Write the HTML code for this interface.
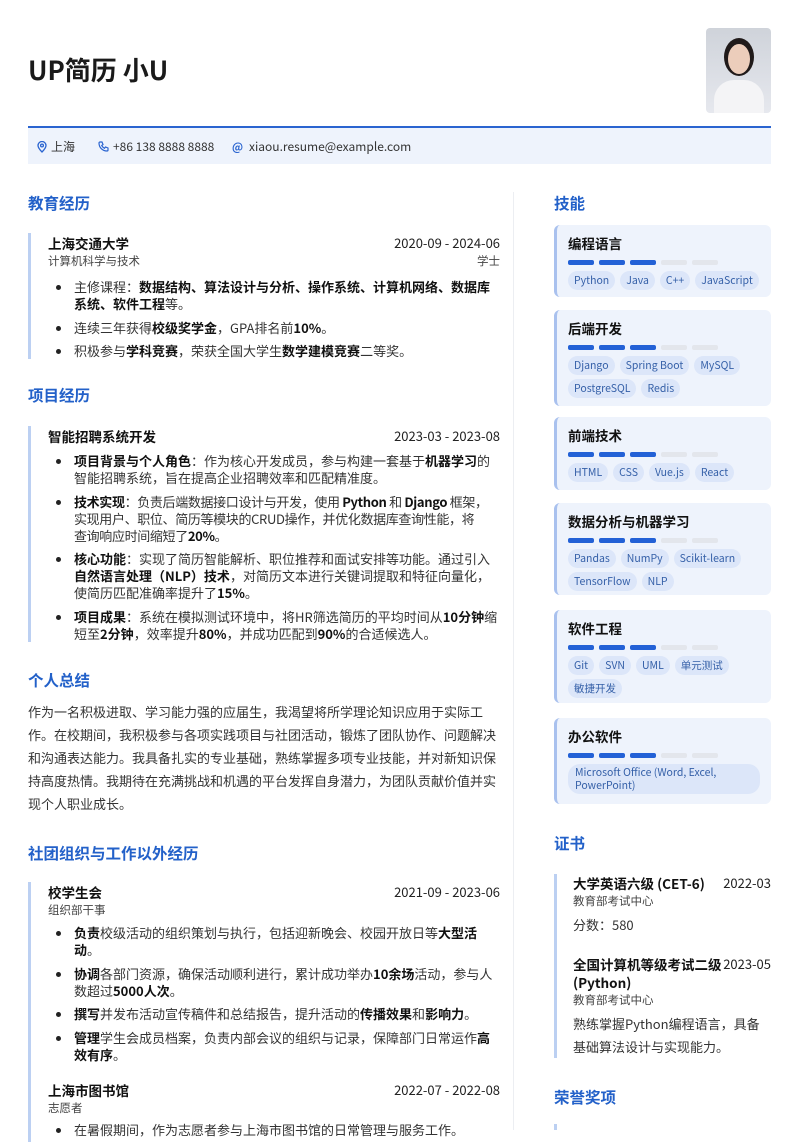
<!DOCTYPE html>
<html><head><meta charset="utf-8"><style>
*{margin:0;padding:0;box-sizing:border-box}
body{width:799px;height:1130px;overflow:hidden;background:#fff;position:relative;font-family:"Noto Sans CJK SC","Liberation Sans",sans-serif;color:#222;font-size:13px}
.a{position:absolute}
h1{position:absolute;left:28px;top:52px;font-size:26px;font-weight:bold;color:#1a1a1a;line-height:36px}
.st{position:absolute;font-size:15.5px;font-weight:bold;color:#2361c9;line-height:20px}
.ent{position:absolute;border-left:3px solid #bcd0f2;padding-left:17px}
.row{display:flex;justify-content:space-between;line-height:18px}
.nm{font-weight:bold;font-size:13.5px;color:#111}
.sub{font-size:11.5px;color:#444;line-height:18px}
ul{list-style:none;margin-top:8px}
li{position:relative;padding-left:26px;line-height:17px;margin-bottom:6.5px;color:#333}
li:before{content:"";position:absolute;left:8px;top:7px;width:5px;height:5px;border-radius:50%;background:#222}
b{color:#111}
.card{position:absolute;left:554px;width:217px;background:#eef3fc;border-left:3px solid #a9c1ee;border-radius:6px;padding:9px 8px 0 11px}
.ct{font-weight:bold;font-size:13.5px;line-height:18px;color:#111}
.bars{display:flex;gap:5px;margin:8px 0 6px}
.bars i{width:26px;height:5px;border-radius:2px;background:#2361d6}
.bars i.e{background:#e3e6ec}
.tags{display:flex;flex-wrap:wrap;gap:4px 5px}
.tag{background:#dce6f9;color:#3560a8;font-size:10.5px;border-radius:10px;padding:0 6px;height:19px;line-height:19px;white-space:nowrap}
</style></head><body>
<h1>UP简历 小U</h1>
<div class="a" style="left:706px;top:28px;width:65px;height:85px;border-radius:4px;background:linear-gradient(#cfd3da,#e6e8ee);overflow:hidden">
<div class="a" style="left:18px;top:10px;width:30px;height:38px;border-radius:50%;background:#201a1a"></div>
<div class="a" style="left:22px;top:16px;width:22px;height:30px;border-radius:50%;background:#eccdbb"></div>
<div class="a" style="left:8px;top:52px;width:50px;height:40px;border-radius:20px 20px 0 0;background:#f4f4f6"></div>
</div>
<div class="a" style="left:28px;top:126px;width:743px;height:2px;background:#2a64d0"></div>
<div class="a" style="left:28px;top:128px;width:743px;height:36px;background:#eef3fc;font-size:12px;color:#333;line-height:38px">
<svg class="a" style="left:9px;top:13px" width="10" height="12" viewBox="0 0 10 12" fill="none" stroke="#2a64d0" stroke-width="1.3"><path d="M5 11C5 11 1 7 1 4.5a4 4 0 0 1 8 0C9 7 5 11 5 11z"/><circle cx="5" cy="4.5" r="1.4"/></svg>
<span class="a" style="left:23px">上海</span>
<svg class="a" style="left:70px;top:13px" width="11" height="11" viewBox="0 0 11 11" fill="none" stroke="#2a64d0" stroke-width="1.2"><path d="M2 1l2 0 1 2.5-1.3 1a6 6 0 0 0 2.8 2.8l1-1.3 2.5 1v2c0 .5-.5 1-1 1C4.5 10 1 6.5 1 2c0-.5.5-1 1-1z"/></svg>
<span class="a" style="left:85px">+86 138 8888 8888</span>
<span class="a" style="left:204px;color:#2a64d0;font-weight:bold;font-size:11px">@</span><span class="a" style="left:221px">xiaou.resume@example.com</span>
</div>
<div class="a" style="left:513px;top:192px;width:1px;height:938px;background:#eceef2"></div>

<div class="st" style="left:28px;top:193px">教育经历</div>
<div class="ent" style="left:28px;top:233px;width:472px">
<div class="row" style="margin-top:1px"><span class="nm">上海交通大学</span><span>2020-09 - 2024-06</span></div>
<div class="sub row"><span>计算机科学与技术</span><span>学士</span></div>
<ul><li>主修课程：<b>数据结构、算法设计与分析、操作系统、计算机网络、数据库系统、软件工程</b>等。</li>
<li>连续三年获得<b>校级奖学金</b>，GPA排名前<b>10%</b>。</li>
<li style="margin-bottom:0">积极参与<b>学科竞赛</b>，荣获全国大学生<b>数学建模竞赛</b>二等奖。</li></ul>
</div>

<div class="st" style="left:28px;top:385px">项目经历</div>
<div class="ent" style="left:28px;top:426px;width:472px">
<div class="row" style="margin-top:1px"><span class="nm">智能招聘系统开发</span><span>2023-03 - 2023-08</span></div>
<ul style="margin-top:7px"><li><b>项目背景与个人角色</b>：作为核心开发成员，参与构建一套基于<b>机器学习</b>的智能招聘系统，旨在提高企业招聘效率和匹配精准度。</li>
<li style="white-space:nowrap;letter-spacing:-0.35px"><b>技术实现</b>：负责后端数据接口设计与开发，使用 <b>Python</b> 和 <b>Django</b> 框架，<br>实现用户、职位、简历等模块的CRUD操作，并优化数据库查询性能，将<br>查询响应时间缩短了<b>20%</b>。</li>
<li><b>核心功能</b>：实现了简历智能解析、职位推荐和面试安排等功能。通过引入<b>自然语言处理（NLP）技术</b>，对简历文本进行关键词提取和特征向量化，使简历匹配准确率提升了<b>15%</b>。</li>
<li style="margin-bottom:0"><b>项目成果</b>：系统在模拟测试环境中，将HR筛选简历的平均时间从<b>10分钟</b>缩短至<b>2分钟</b>，效率提升<b>80%</b>，并成功匹配到<b>90%</b>的合适候选人。</li></ul>
</div>

<div class="st" style="left:28px;top:670px">个人总结</div>
<div class="a" style="left:28px;top:700px;width:472px;line-height:23px;color:#333">作为一名积极进取、学习能力强的应届生，我渴望将所学理论知识应用于实际工作。在校期间，我积极参与各项实践项目与社团活动，锻炼了团队协作、问题解决和沟通表达能力。我具备扎实的专业基础，熟练掌握多项专业技能，并对新知识保持高度热情。我期待在充满挑战和机遇的平台发挥自身潜力，为团队贡献价值并实现个人职业成长。</div>

<div class="st" style="left:28px;top:843px">社团组织与工作以外经历</div>
<div class="ent" style="left:28px;top:882px;width:472px;height:260px">
<div class="row" style="margin-top:1px"><span class="nm">校学生会</span><span>2021-09 - 2023-06</span></div>
<div class="sub">组织部干事</div>
<ul style="margin-top:5px"><li><b>负责</b>校级活动的组织策划与执行，包括迎新晚会、校园开放日等<b>大型活动</b>。</li>
<li><b>协调</b>各部门资源，确保活动顺利进行，累计成功举办<b>10余场</b>活动，参与人数超过<b>5000人次</b>。</li>
<li><b>撰写</b>并发布活动宣传稿件和总结报告，提升活动的<b>传播效果</b>和<b>影响力</b>。</li>
<li><b>管理</b>学生会成员档案，负责内部会议的组织与记录，保障部门日常运作<b>高效有序</b>。</li></ul>
<div class="row" style="margin-top:18px"><span class="nm">上海市图书馆</span><span>2022-07 - 2022-08</span></div>
<div class="sub">志愿者</div>
<ul style="margin-top:4px"><li>在暑假期间，作为志愿者参与上海市图书馆的日常管理与服务工作。</li></ul>
</div>

<div class="st" style="left:554px;top:193px">技能</div>
<div class="card" style="top:225px;height:72px"><div class="ct">编程语言</div><div class="bars"><i></i><i></i><i></i><i class="e"></i><i class="e"></i></div><div class="tags"><span class="tag">Python</span><span class="tag">Java</span><span class="tag">C++</span><span class="tag">JavaScript</span></div></div>
<div class="card" style="top:310px;height:96px"><div class="ct">后端开发</div><div class="bars"><i></i><i></i><i></i><i class="e"></i><i class="e"></i></div><div class="tags"><span class="tag">Django</span><span class="tag">Spring Boot</span><span class="tag">MySQL</span><span class="tag">PostgreSQL</span><span class="tag">Redis</span></div></div>
<div class="card" style="top:417px;height:73px"><div class="ct">前端技术</div><div class="bars"><i></i><i></i><i></i><i class="e"></i><i class="e"></i></div><div class="tags"><span class="tag">HTML</span><span class="tag">CSS</span><span class="tag">Vue.js</span><span class="tag">React</span></div></div>
<div class="card" style="top:503px;height:92px"><div class="ct">数据分析与机器学习</div><div class="bars"><i></i><i></i><i></i><i class="e"></i><i class="e"></i></div><div class="tags"><span class="tag">Pandas</span><span class="tag">NumPy</span><span class="tag">Scikit-learn</span><span class="tag">TensorFlow</span><span class="tag">NLP</span></div></div>
<div class="card" style="top:610px;height:93px"><div class="ct">软件工程</div><div class="bars"><i></i><i></i><i></i><i class="e"></i><i class="e"></i></div><div class="tags"><span class="tag">Git</span><span class="tag">SVN</span><span class="tag">UML</span><span class="tag">单元测试</span><span class="tag">敏捷开发</span></div></div>
<div class="card" style="top:718px;height:86px"><div class="ct">办公软件</div><div class="bars"><i></i><i></i><i></i><i class="e"></i><i class="e"></i></div><div class="tags"><span class="tag" style="height:auto;line-height:13px;padding:2px 7px;border-radius:12px;width:192px;white-space:normal">Microsoft Office (Word, Excel, PowerPoint)</span></div></div>

<div class="st" style="left:554px;top:833px">证书</div>
<div class="ent" style="left:554px;top:874px;width:217px;border-left-width:3px;padding-left:16px">
<div class="row"><span class="nm">大学英语六级 (CET-6)</span><span>2022-03</span></div>
<div class="sub">教育部考试中心</div>
<div style="line-height:20px;margin-top:5px;color:#333">分数：580</div>
<div class="row" style="margin-top:20px"><span class="nm" style="width:150px">全国计算机等级考试二级 (Python)</span><span>2023-05</span></div>
<div class="sub">教育部考试中心</div>
<div style="line-height:23px;margin-top:3px;color:#333">熟练掌握Python编程语言，具备基础算法设计与实现能力。</div>
</div>
<div class="st" style="left:554px;top:1087px">荣誉奖项</div>
<div class="a" style="left:554px;top:1124px;width:3px;height:6px;background:#bcd0f2"></div>
</body></html>
